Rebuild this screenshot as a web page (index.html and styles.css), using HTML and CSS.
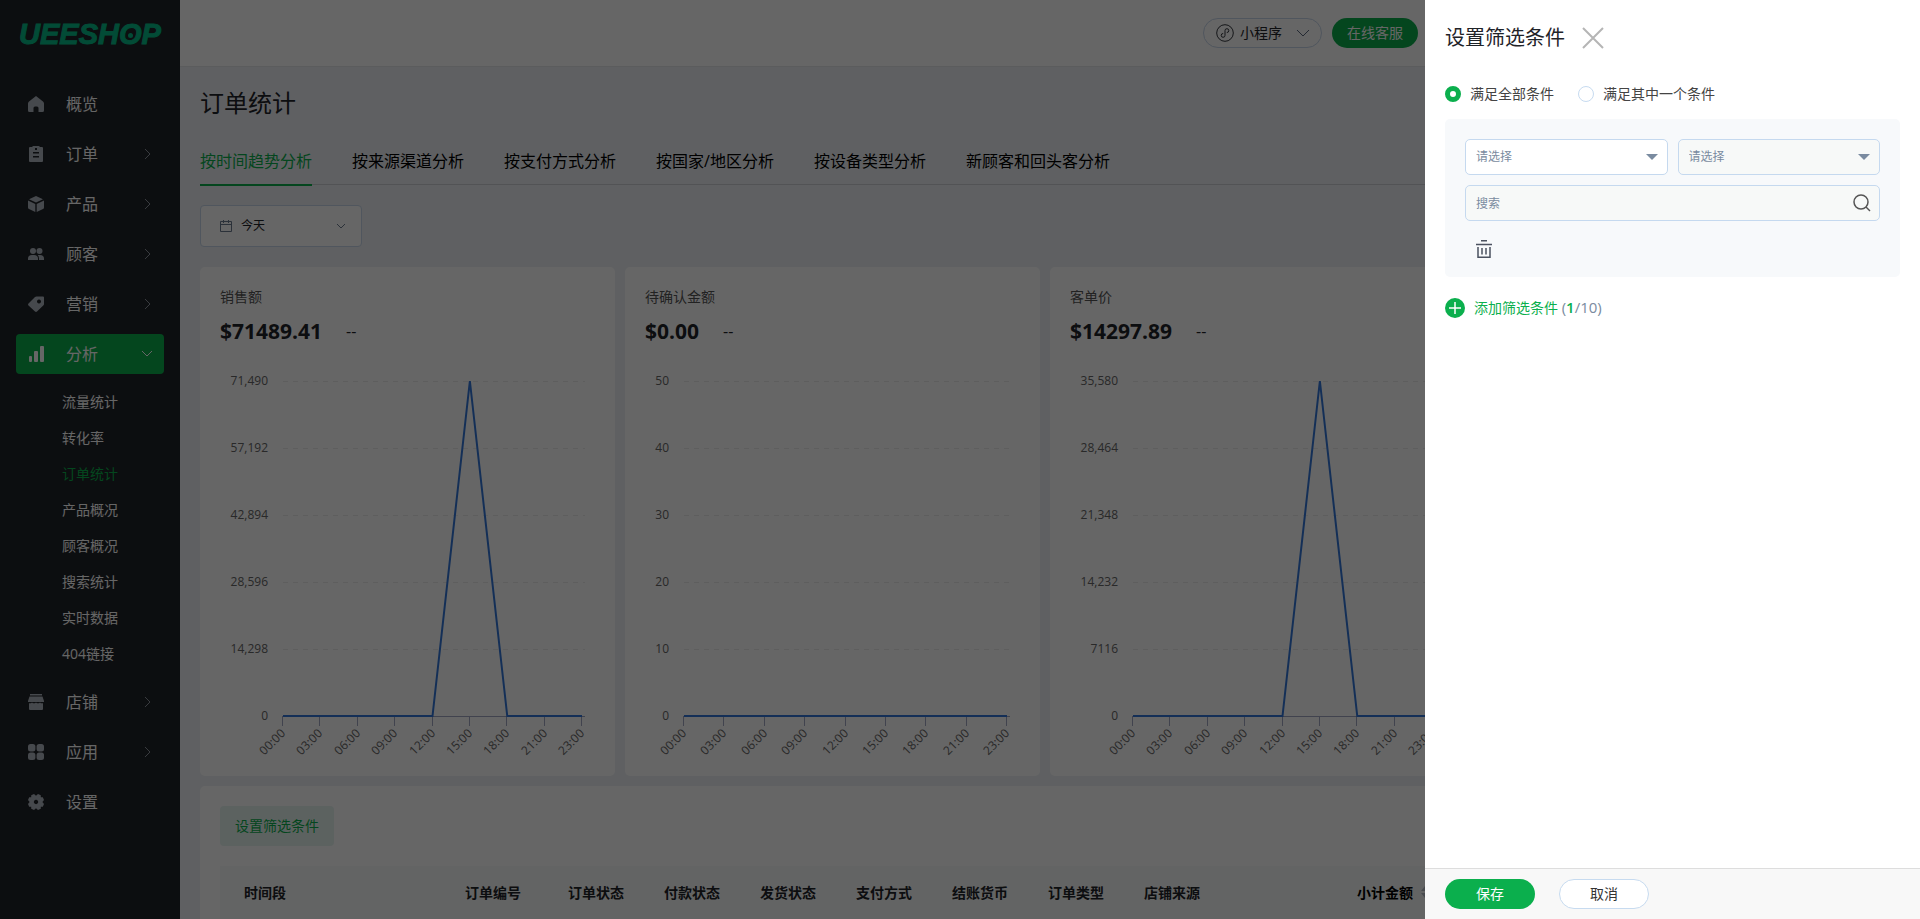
FILE: index.html
```html
<!DOCTYPE html>
<html lang="zh-CN">
<head>
    <meta charset="UTF-8">
    <meta name="viewport" content="width=device-width, initial-scale=1.0">
    <title>订单统计</title>
    <link rel="stylesheet" href="styles.css">
</head>
<body>
    <div class="app">
        <aside class="sidebar">
            <a href="#" class="logo">UEESH<span class="logo-o">O</span>P</a>
            <nav class="menu">
                <a href="#" class="menu-item">
                    <svg class="icon" viewBox="0 0 16 16"><path d="M8 0 15 5.500q1 .8 1 2V14.500q0 1.500-1.500 1.500H10.500V12q0-1.500-1.500-1.500H7Q5.500 10.500 5.500 12v4h-4Q0 16 0 14.500V7.500q0-1.200 1-2z"/></svg>
                    <span>概览</span>
                </a>
                <a href="#" class="menu-item">
                    <svg class="icon" viewBox="0 0 16 16"><path fill-rule="evenodd" d="M5 0h6l1 1h2q1 0 1 1v13q0 1-1 1H2q-1 0-1-1V2q0-1 1-1h2zM7 2v2h2V2zM5 6v1.500h6V6zM5 10v1.500h6V10z"/></svg>
                    <span>订单</span>
                    <svg class="arrow" viewBox="0 0 12 12"><path d="M4 1l5 5-5 5"/></svg>
                </a>
                <a href="#" class="menu-item">
                    <svg class="icon" viewBox="0 0 16 16"><path d="M8 0l7 3.200L8 6.600 1 3.200zM0 4.500l7.300 3.500v8L1 13q-1-.5-1-1.500zM16 4.500L8.700 8v8l6.300-3q1-.5 1-1.500z"/></svg>
                    <span>产品</span>
                    <svg class="arrow" viewBox="0 0 12 12"><path d="M4 1l5 5-5 5"/></svg>
                </a>
                <a href="#" class="menu-item">
                    <svg class="icon" viewBox="0 0 16 16"><circle cx="5" cy="5" r="3"/><circle cx="11.500" cy="5" r="3"/><path d="M0 14v-1.500Q0 9 4 9h2q4 0 4 3.500V14zM11 14v-1.500q0-2.200-1.300-3.500H12q4 0 4 3.500V14z"/></svg>
                    <span>顾客</span>
                    <svg class="arrow" viewBox="0 0 12 12"><path d="M4 1l5 5-5 5"/></svg>
                </a>
                <a href="#" class="menu-item">
                    <svg class="icon" viewBox="0 0 16 16"><path fill-rule="evenodd" d="M8.500.5H15q1 0 1 1V8q0 .7-.5 1.200L9 15.500q-1 .9-2 0L.5 9.500q-.9-1 0-2L7 1q.6-.5 1.500-.5zM11 3.500a2 2 0 1 0 .01 0z"/></svg>
                    <span>营销</span>
                    <svg class="arrow" viewBox="0 0 12 12"><path d="M4 1l5 5-5 5"/></svg>
                </a>
                <a href="#" class="menu-item active">
                    <svg class="icon" viewBox="0 0 16 16"><rect x="1" y="10" width="3" height="6" rx="1"/><rect x="6" y="5" width="4" height="11" rx="1"/><rect x="12" y="0" width="4" height="16" rx="1"/></svg>
                    <span>分析</span>
                    <svg class="arrow" viewBox="0 0 12 12"><path d="M1 3l5 5 5-5"/></svg>
                </a>
                <div class="submenu">
                    <a href="#">流量统计</a>
                    <a href="#">转化率</a>
                    <a href="#" class="current">订单统计</a>
                    <a href="#">产品概况</a>
                    <a href="#">顾客概况</a>
                    <a href="#">搜索统计</a>
                    <a href="#">实时数据</a>
                    <a href="#">404链接</a>
                </div>
                <a href="#" class="menu-item">
                    <svg class="icon" viewBox="0 0 16 16"><path d="M2 0h12v1.500H2zM1.500 2.500h13L16 7v1H0V7zM1 9.200h2l1-.7 1 .7h2l1-.7 1 .7h2l1-.7 1 .7h2V15q0 1-1 1H2q-1 0-1-1z"/></svg>
                    <span>店铺</span>
                    <svg class="arrow" viewBox="0 0 12 12"><path d="M4 1l5 5-5 5"/></svg>
                </a>
                <a href="#" class="menu-item">
                    <svg class="icon" viewBox="0 0 16 16"><rect width="7.400" height="7.400" rx="2.500"/><rect x="8.600" width="7.400" height="7.400" rx="2.500"/><rect y="8.600" width="7.400" height="7.400" rx="2.500"/><rect x="8.600" y="8.600" width="7.400" height="7.400" rx="2.500"/></svg>
                    <span>应用</span>
                    <svg class="arrow" viewBox="0 0 12 12"><path d="M4 1l5 5-5 5"/></svg>
                </a>
                <a href="#" class="menu-item">
                    <svg class="icon" viewBox="0 0 16 16"><path fill-rule="evenodd" d="M8 1.800 10 0 12.800 1.200V3.200H14.800L16 6 14.400 8 16 10 14.800 12.800H12.800V14.800L10 16 8 14.200 6 16 3.200 14.800V12.800H1.200L0 10 1.600 8 0 6 1.200 3.200H3.200V1.200L6 0zM8 5.800a2.200 2.200 0 1 0 .01 0z"/></svg>
                    <span>设置</span>
                </a>
            </nav>
        </aside>

        <div class="main">
            <header class="topbar">
                <button type="button" class="pill">
                    <svg class="pill-icon" viewBox="0 0 18 18"><circle cx="9" cy="9" r="8.300"/><path d="M7.200 9.500a1.900 1.900 0 1 0 1.800 1.900V6.600a1.900 1.900 0 1 1 1.800 1.900"/></svg>
                    <span>小程序</span>
                    <svg class="pill-arrow" viewBox="0 0 14 14"><path d="M1 4l6 6 6-6"/></svg>
                </button>
                <button type="button" class="btn-service">在线客服</button>
            </header>

            <main class="content">
                <h1>订单统计</h1>
                <nav class="tabs">
                    <a href="#" class="tab selected">按时间趋势分析</a>
                    <a href="#" class="tab">按来源渠道分析</a>
                    <a href="#" class="tab">按支付方式分析</a>
                    <a href="#" class="tab">按国家/地区分析</a>
                    <a href="#" class="tab">按设备类型分析</a>
                    <a href="#" class="tab">新顾客和回头客分析</a>
                </nav>

                <button type="button" class="date-picker">
                    <svg class="date-icon" viewBox="0 0 12 12"><path d="M.5 1.500h11v10H.5zM.5 4.500h11M3.500 0v3M8.500 0v3"/></svg>
                    <span>今天</span>
                    <svg class="date-arrow" viewBox="0 0 10 10"><path d="M1 3l4 4 4-4"/></svg>
                </button>

                <section class="cards">
                    <article class="card">
                        <h2>销售额</h2>
                        <p class="amount"><strong>$71489.41</strong><span>--</span></p>
                        <svg class="chart" id="chart-sales" viewBox="0 0 415 421"></svg>
                    </article>
                    <article class="card">
                        <h2>待确认金额</h2>
                        <p class="amount"><strong>$0.00</strong><span>--</span></p>
                        <svg class="chart" id="chart-pending" viewBox="0 0 415 421"></svg>
                    </article>
                    <article class="card">
                        <h2>客单价</h2>
                        <p class="amount"><strong>$14297.89</strong><span>--</span></p>
                        <svg class="chart" id="chart-average" viewBox="0 0 415 421"></svg>
                    </article>
                </section>

                <section class="list">
                    <button type="button" class="btn-filter">设置筛选条件</button>
                    <table class="orders">
                        <thead>
                            <tr>
                                <th class="col-time">时间段</th>
                                <th class="col-number">订单编号</th>
                                <th>订单状态</th>
                                <th>付款状态</th>
                                <th>发货状态</th>
                                <th>支付方式</th>
                                <th>结账货币</th>
                                <th>订单类型</th>
                                <th class="col-source">店铺来源</th>
                                <th class="col-total">小计金额 <svg class="sort" viewBox="0 0 8 12"><path d="M4 0l4 5H0zM4 12L0 7h8z"/></svg></th>
                            </tr>
                        </thead>
                    </table>
                </section>
            </main>
        </div>
    </div>

    <div class="overlay">
        <form class="drawer">
            <div class="drawer-head">
                <h2>设置筛选条件</h2>
                <button type="button" class="close" aria-label="关闭">
                    <svg viewBox="0 0 22 22"><path d="M1 1l20 20M21 1L1 21"/></svg>
                </button>
            </div>
            <div class="drawer-body">
                <div class="radios">
                    <label><input type="radio" name="match" checked>满足全部条件</label>
                    <label><input type="radio" name="match">满足其中一个条件</label>
                </div>
                <div class="conditions">
                    <div class="fields">
                        <div class="select">
                            <select aria-label="条件"><option>请选择</option></select>
                        </div>
                        <div class="select">
                            <select aria-label="关系" disabled><option>请选择</option></select>
                        </div>
                    </div>
                    <div class="search">
                        <input type="text" placeholder="搜索" aria-label="搜索" disabled>
                        <svg viewBox="0 0 18 18"><circle cx="8" cy="8" r="7"/><path d="M13 13l4 4"/></svg>
                    </div>
                    <button type="button" class="remove" aria-label="删除">
                        <svg viewBox="0 0 16 18"><path d="M5 .8h6M0 4.500h16M2 7v10.200h12V7M6 8v6.500M10 8v6.500"/></svg>
                    </button>
                </div>
                <button type="button" class="add">
                    <svg viewBox="0 0 20 20"><circle cx="10" cy="10" r="10"/><path d="M4 10h12M10 4v12"/></svg>
                    <span>添加筛选条件 <span class="count">(<b>1</b>/10)</span></span>
                </button>
            </div>
            <div class="drawer-foot">
                <button type="submit" class="save">保存</button>
                <button type="button" class="cancel">取消</button>
            </div>
        </form>
    </div>
    <script src="charts.js"></script>
</body>
</html>
```
FILE: styles.css
```css
* {
    box-sizing: border-box;
}
body {
    margin: 0;
    height: 100vh;
    overflow: hidden;
    font-family: "Open Sans", "Noto Sans CJK SC", sans-serif;
    font-size: 14px;
    line-height: 20px;
    color: #1f2328;
    background: #edf0f5;
}
h1, h2, p {
    margin: 0;
    font-weight: normal;
}
a {
    color: inherit;
    text-decoration: none;
}
button, input, select {
    font: inherit;
    color: inherit;
}
button {
    border: 0;
    padding: 0;
    background: none;
    cursor: pointer;
}
svg {
    flex: none;
}
.app {
    display: flex;
    height: 100vh;
}

/* sidebar */
.sidebar {
    flex: none;
    width: 180px;
    background: #202328;
    color: #fff;
}
.logo {
    display: block;
    height: 84px;
    padding: 14px 19px;
    font-family: "Liberation Sans", Arial, sans-serif;
    font-size: 29px;
    font-weight: bold;
    font-style: italic;
    line-height: 40px;
    color: #06bb88;
    -webkit-text-stroke: 1px #06bb88;
}
.logo-o {
    position: relative;
}
.logo-o::after {
    content: "";
    position: absolute;
    top: 15px;
    left: 9px;
    width: 5px;
    height: 5px;
    border-radius: 50%;
    background: #06bb88;
}
.menu {
    padding: 0 16px;
}
.menu-item {
    display: flex;
    align-items: center;
    height: 40px;
    margin-bottom: 10px;
    padding: 0 11px 0 12px;
    border-radius: 4px;
    font-size: 16px;
}
.menu-item .icon {
    width: 16px;
    height: 16px;
    margin-right: 22px;
    fill: #b0b6c0;
}
.menu-item.active {
    background: #0baf4d;
}
.menu-item.active .icon {
    fill: #fff;
}
.arrow {
    width: 12px;
    height: 12px;
    margin-left: auto;
    fill: none;
    stroke: #8f959e;
}
.active .arrow {
    stroke: #fff;
}
.submenu {
    display: flex;
    flex-direction: column;
    margin-bottom: 10px;
    padding-left: 46px;
    line-height: 36px;
}
.submenu .current {
    color: #0baf4d;
}

/* top bar */
.main {
    flex: 1;
    min-width: 0;
}
.topbar {
    display: flex;
    justify-content: flex-end;
    align-items: center;
    gap: 10px;
    height: 67px;
    padding-right: 502px;
    background: #fff;
    border-bottom: 1px solid #e3e7e9;
}
.pill {
    display: flex;
    align-items: center;
    width: 119px;
    height: 30px;
    padding: 0 11px 0 12px;
    border: 1px solid #c7d6ea;
    border-radius: 15px;
}
.pill svg {
    fill: none;
    stroke: #33373d;
}
.pill-icon {
    width: 18px;
    height: 18px;
    margin-right: 6px;
}
.pill .pill-arrow {
    width: 14px;
    height: 14px;
    margin-left: auto;
    stroke: #5a6a80;
}
.btn-service {
    width: 86px;
    height: 30px;
    border-radius: 15px;
    background: #0baf4d;
    color: #fff;
}

/* page content */
.content {
    padding: 16px 30px 0 20px;
}
h1 {
    font-size: 24px;
    line-height: 40px;
}
.tabs {
    display: flex;
    gap: 40px;
    margin-top: 14px;
    margin-right: -10px;
    border-bottom: 1px solid #ccd0d5;
    font-size: 16px;
    color: #000;
}
.tab {
    height: 49px;
    margin-bottom: -2px;
    line-height: 48px;
    border-bottom: 2px solid transparent;
}
.tab.selected {
    color: #0baf4d;
    border-color: #0baf4d;
}
.date-picker {
    display: flex;
    align-items: center;
    width: 162px;
    height: 42px;
    margin: 20px 0;
    padding: 0 15px 0 19px;
    border: 1px solid #c7d6ea;
    border-radius: 4px;
    background: #fff;
    font-size: 12px;
}
.date-picker svg {
    fill: none;
    stroke: #6b7a90;
}
.date-icon {
    width: 12px;
    height: 12px;
    margin-right: 9px;
}
.date-arrow {
    width: 10px;
    height: 10px;
    margin-left: auto;
}
.cards {
    display: grid;
    grid-template-columns: repeat(4, 1fr);
    gap: 10px;
}
.card {
    padding-top: 20px;
    border-radius: 5px;
    background: #fff;
}
.card h2 {
    padding: 0 20px;
    font-size: 14px;
    color: #555;
}
.amount {
    display: flex;
    gap: 24px;
    padding: 0 20px;
    line-height: 48px;
}
.amount strong {
    font-size: 21px;
}
.amount span {
    font-size: 16px;
}
.chart {
    display: block;
    width: 100%;
    height: auto;
    font-size: 12px;
}
.chart text {
    fill: #666;
    text-anchor: end;
}
.chart .grid-line {
    stroke: #ebebeb;
    stroke-dasharray: 5 5;
}
.chart .axis {
    stroke: #a3a8c4;
}
.chart .series {
    fill: none;
    stroke: #3377d9;
    stroke-width: 2;
}
.list {
    margin-top: 10px;
    padding: 20px;
    border-radius: 5px;
    background: #fff;
}
.btn-filter {
    display: block;
    height: 40px;
    margin-bottom: 20px;
    padding: 0 15px;
    border-radius: 4px;
    background: #e7f4f1;
    color: #0baf4d;
}
.orders {
    width: 100%;
    table-layout: fixed;
    border-collapse: collapse;
}
.orders th {
    width: 96px;
    height: 54px;
    padding: 0 0 0 24px;
    background: #f7faf9;
    text-align: left;
    white-space: nowrap;
}
.orders .col-time {
    width: 221px;
}
.orders .col-number {
    width: 103px;
}
.orders .col-source {
    width: 213px;
}
.orders .col-total {
    width: auto;
    color: #000;
}
.sort {
    width: 8px;
    height: 12px;
    margin-left: 4px;
    fill: #b5bcc6;
}

/* filter drawer */
.overlay {
    position: fixed;
    inset: 0;
    display: flex;
    justify-content: flex-end;
    background: rgba(0, 0, 0, .6);
}
.drawer {
    display: flex;
    flex-direction: column;
    width: 495px;
    background: #fff;
}
.drawer-head {
    display: flex;
    align-items: center;
    gap: 17px;
    padding: 18px 20px;
}
.drawer-head h2 {
    font-size: 20px;
    line-height: 40px;
}
.close svg {
    display: block;
    width: 22px;
    height: 22px;
    fill: none;
    stroke: #b5b5b5;
    stroke-width: 2;
}
.drawer-body {
    flex: 1;
    padding: 8px 20px;
}
.radios {
    display: flex;
    gap: 24px;
    margin-bottom: 15px;
    color: #444;
}
.radios label {
    display: flex;
    align-items: center;
    gap: 9px;
}
.radios input {
    appearance: none;
    width: 16px;
    height: 16px;
    margin: 0;
    border: 1px solid #c7dbf0;
    border-radius: 50%;
    background: #fff;
}
.radios input:checked {
    border: 5px solid #0baf4d;
}
.conditions {
    padding: 20px 20px 19px;
    border-radius: 5px;
    background: #f7f9fb;
}
.fields {
    display: grid;
    grid-template-columns: 1fr 1fr;
    gap: 10px;
    margin-bottom: 10px;
}
.select, .search {
    position: relative;
    font-size: 12px;
    color: #7a8ba0;
}
.select select, .search input {
    display: block;
    appearance: none;
    width: 100%;
    height: 36px;
    padding: 0 10px;
    border: 1px solid #c5d9ef;
    border-radius: 5px;
    background: #fff;
    color: #7a8ba0;
    opacity: 1;
}
.select select:disabled, .search input:disabled {
    background: #f7f9f8;
}
.search input::placeholder {
    color: #7a8ba0;
}
.select::after {
    content: "";
    position: absolute;
    top: 15px;
    right: 10px;
    border: 6px solid transparent;
    border-top-color: #7a8ba0;
    border-bottom: 0;
}
.search svg {
    position: absolute;
    top: 9px;
    right: 9px;
    width: 18px;
    height: 18px;
    fill: none;
    stroke: #555;
    stroke-width: 1.5;
}
.remove {
    display: block;
    margin: 19px 11px 0;
}
.remove svg {
    display: block;
    width: 16px;
    height: 18px;
    fill: none;
    stroke: #4b5260;
    stroke-width: 1.5;
}
.add {
    display: flex;
    align-items: center;
    gap: 9px;
    margin-top: 20px;
    color: #0baf4d;
}
.add svg {
    width: 20px;
    height: 20px;
    fill: #0baf4d;
}
.add svg path {
    stroke: #fff;
    stroke-width: 1.5;
}
.add .count {
    font-size: 15px;
    color: #7a8ba0;
}
.add b {
    font-weight: 600;
    color: #0baf4d;
}
.drawer-foot {
    display: flex;
    gap: 24px;
    padding: 10px 20px;
    border-top: 1px solid #ddd;
    background: #f8f8f8;
}
.save, .cancel {
    width: 90px;
    height: 30px;
    border-radius: 15px;
}
.save {
    background: #0baf4d;
    color: #fff;
}
.cancel {
    border: 1px solid #c7dbf0;
    background: #fff;
    color: #333;
}
```
FILE: charts.js
```js
const hours = ['00:00', '03:00', '06:00', '09:00', '12:00', '15:00', '18:00', '21:00', '23:00'];
const top_y = 26;
const bottom_y = 361;
const right_x = 382;

function drawChart(id, left, labels, values) {
    const rowHeight = (bottom_y - top_y) / (labels.length - 1);
    const step = (right_x - left) / (hours.length - 1);
    let html = '';
    labels.forEach((label, i) => {
        const y = Math.round(top_y + i * rowHeight);
        html += `<text x="${left - 15}" y="${y + 4}">${label}</text>`;
        if (i < labels.length - 1) {
            html += `<path class="grid-line" d="M${left} ${y + 0.5}H385"/>`;
        }
    });
    html += `<path class="axis" d="M${left} ${bottom_y + 0.5}H385"/>`;
    hours.forEach((hour, i) => {
        const x = Math.round(left + i * step);
        html += `<path class="axis" d="M${x - 0.5} ${bottom_y}v10"/>`;
        html += `<text transform="translate(${x + 3} ${bottom_y + 18}) rotate(-45)">${hour}</text>`;
    });
    // values are fractions of the highest label
    const points = values.map((v, i) => `${left + i * step},${bottom_y - v * (bottom_y - top_y)}`);
    html += `<polyline class="series" points="${points.join(' ')}"/>`;
    document.getElementById(id).innerHTML = html;
}

drawChart('chart-sales', 83, ['71,490', '57,192', '42,894', '28,596', '14,298', '0'], [0, 0, 0, 0, 0, 1, 0, 0, 0]);
drawChart('chart-pending', 59, ['50', '40', '30', '20', '10', '0'], [0, 0, 0, 0, 0, 0, 0, 0, 0]);
drawChart('chart-average', 83, ['35,580', '28,464', '21,348', '14,232', '7116', '0'], [0, 0, 0, 0, 0, 1, 0, 0, 0]);
```
